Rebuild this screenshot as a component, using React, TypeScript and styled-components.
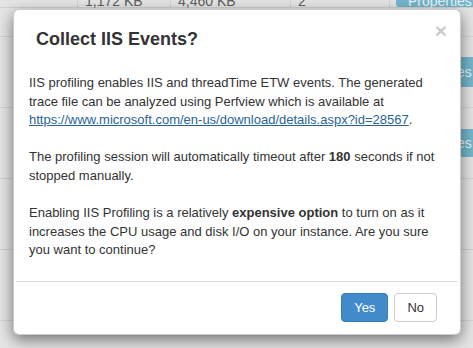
import React from "react";
import styled, { createGlobalStyle } from "styled-components";

const Global = createGlobalStyle`
  html, body { margin: 0; padding: 0; }
  body {
    width: 473px;
    height: 348px;
    overflow: hidden;
    background: #e5e5e5;
    font-family: "Liberation Sans", Arial, Helvetica, sans-serif;
  }
  * { box-sizing: border-box; }
`;

const Page = styled.div`
  position: relative;
  width: 473px;
  height: 348px;
  overflow: hidden;
  background: #e5e5e5;
`;

const Table = styled.div`
  display: flex;
  flex-direction: column;
  margin-top: -26px;
`;

const Row = styled.div<{ $h: number }>`
  display: grid;
  grid-template-columns: 77px 93px 120px 99px 84px;
  height: ${(p) => p.$h}px;
  border-bottom: 1px solid #d2d2d2;
`;

const Cell = styled.div<{ $line?: boolean }>`
  display: flex;
  align-items: flex-end;
  height: 100%;
  padding-left: 7px;
  font-size: 14px;
  line-height: 12px;
  color: #5e5e5e;
  border-left: ${(p) => (p.$line ? "1px solid #d2d2d2" : "none")};
`;

const ActionCell = styled.div<{ $bottom?: boolean }>`
  display: flex;
  height: 100%;
  align-items: ${(p) => (p.$bottom ? "flex-end" : "center")};
  padding-left: 6px;
  border-left: 1px solid #d2d2d2;
`;

const PropsButton = styled.div<{ $h: number; $bottom?: boolean }>`
  height: ${(p) => p.$h}px;
  width: 80px;
  flex-shrink: 0;
  display: flex;
  align-items: ${(p) => (p.$bottom ? "flex-end" : "center")};
  padding-left: 12px;
  background: #74b6cb;
  color: #e9f3f6;
  font-size: 14px;
  line-height: ${(p) => (p.$bottom ? "12px" : "normal")};
  border-radius: 3px;
`;

const Modal = styled.div`
  position: absolute;
  left: 13px;
  top: 9px;
  width: 448px;
  display: flex;
  flex-direction: column;
  background: #fff;
  border: 1px solid rgba(0, 0, 0, 0.2);
  border-radius: 6px;
  box-shadow: 0 5px 15px rgba(0, 0, 0, 0.5);
  color: #333;
`;

const Header = styled.div`
  display: flex;
  justify-content: space-between;
  align-items: flex-start;
  padding: 19px 13px 0 22px;
`;

const Title = styled.h3`
  margin: 0;
  font-size: 18px;
  font-weight: bold;
  line-height: 20px;
  color: #333;
`;

const Close = styled.button`
  border: 0;
  background: transparent;
  padding: 0;
  margin-top: -9px;
  font-family: "Liberation Sans", Arial, sans-serif;
  font-size: 21px;
  font-weight: bold;
  line-height: 21px;
  color: #000;
  opacity: 0.2;
  cursor: pointer;
`;

const Body = styled.div`
  padding: 25px 15px 21px 15px;
  font-size: 13px;
  line-height: 1.428571;
`;

const Para = styled.p`
  margin: 0 0 18.57px 0;
  &:last-child { margin-bottom: 0; }
`;

const Link = styled.a`
  color: #2a6496;
  text-decoration: underline;
`;

const Footer = styled.div`
  display: flex;
  justify-content: flex-end;
  gap: 6px;
  margin: 0 2px;
  padding: 11px 21px 12px 0;
  border-top: 1px solid #e0e0e0;
`;

const Btn = styled.button<{ $primary?: boolean }>`
  height: 29px;
  padding: 0 12px;
  display: flex;
  align-items: center;
  font-family: "Liberation Sans", Arial, sans-serif;
  font-size: 13px;
  border-radius: 4px;
  border: 1px solid ${(p) => (p.$primary ? "#357ebd" : "#ccc")};
  background: ${(p) => (p.$primary ? "#428bca" : "#fff")};
  color: ${(p) => (p.$primary ? "#fff" : "#333")};
  cursor: pointer;
`;

const rows = [
  { h: 34, a: "1,172 KB", b: "4,460 KB", c: "2", btn: 31, bottom: true },
  { h: 29 },
  { h: 71, btn: 30 },
  { h: 71, btn: 28 },
  { h: 71 },
  { h: 71 },
];

export default function App() {
  return (
    <Page>
      <Global />
      <Table>
        {rows.map((r, i) => (
          <Row key={i} $h={r.h}>
            <Cell />
            <Cell $line>{r.a}</Cell>
            <Cell $line>{r.b}</Cell>
            <Cell $line>{r.c}</Cell>
            <ActionCell $bottom={r.bottom}>
              {r.btn ? (
                <PropsButton $h={r.btn} $bottom={r.bottom}>
                  Properties
                </PropsButton>
              ) : null}
            </ActionCell>
          </Row>
        ))}
      </Table>
      <Modal>
        <Header>
          <Title>Collect IIS Events?</Title>
          <Close aria-label="Close">×</Close>
        </Header>
        <Body>
          <Para>
            IIS profiling enables IIS and threadTime ETW events. The generated
            trace file can be analyzed using Perfview which is available at{" "}
            <Link href="#">https://www.microsoft.com/en-us/download/details.aspx?id=28567</Link>.
          </Para>
          <Para>
            The profiling session will automatically timeout after <b>180</b> seconds if not
            stopped manually.
          </Para>
          <Para>
            Enabling IIS Profiling is a relatively <b>expensive option</b> to turn on as it
            increases the CPU usage and disk I/O on your instance. Are you sure
            you want to continue?
          </Para>
        </Body>
        <Footer>
          <Btn $primary>Yes</Btn>
          <Btn>No</Btn>
        </Footer>
      </Modal>
    </Page>
  );
}
